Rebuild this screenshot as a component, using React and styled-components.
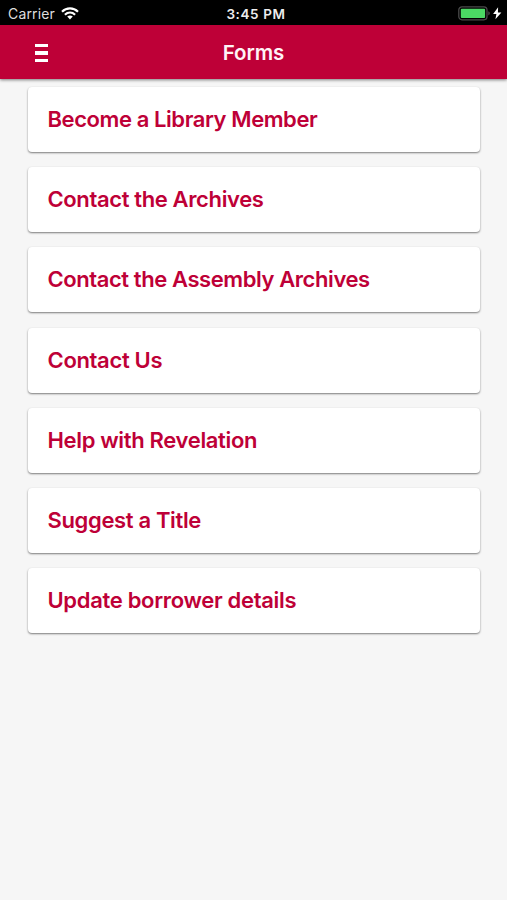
import React from "react";
import styled, { createGlobalStyle } from "styled-components";

const GlobalStyle = createGlobalStyle`
  * { box-sizing: border-box; }
  body {
    margin: 0;
    background: #f6f6f6;
    font-family: Inter, "Liberation Sans", sans-serif;
  }
`;

const Screen = styled.div`
  display: flex;
  flex-direction: column;
  height: 900px;
  overflow: hidden;
  background: #f6f6f6;
`;

const StatusBar = styled.div`
  display: grid;
  grid-template-columns: 1fr auto 1fr;
  align-items: center;
  flex: none;
  height: 25px;
  padding: 2px 5px 0 8px;
  background: #000;
  color: #fff;
  font-size: 14px;
  line-height: 20px;
`;

const Carrier = styled.div`
  display: flex;
  align-items: center;
  gap: 6px;
  color: #dedede;
  letter-spacing: 0.15px;
`;

const Clock = styled.time`
  padding-left: 2px;
  color: #ededed;
  font-weight: 600;
  font-size: 13.5px;
  letter-spacing: 0.6px;
`;

const Power = styled.div`
  display: flex;
  justify-content: flex-end;
`;

const Header = styled.header`
  display: grid;
  grid-template-columns: 1fr auto 1fr;
  align-items: center;
  flex: none;
  z-index: 1;
  height: 54px;
  padding: 2px 35px 0;
  background: #be0037;
  box-shadow: 0 1px 3px rgba(0, 0, 0, 0.5);
`;

const MenuButton = styled.button`
  display: flex;
  flex-direction: column;
  gap: 4px;
  width: 13px;
  padding: 0;
  border: 0;
  background: none;
`;

const MenuLine = styled.span`
  height: 3.5px;
  background: #fff;
`;

const Title = styled.h1`
  margin: 0;
  color: #fff3f6;
  font-size: 20.5px;
  font-weight: 600;
  letter-spacing: -0.1px;
  line-height: 26px;
`;

const List = styled.main`
  display: flex;
  flex-direction: column;
  gap: 15.2px;
  padding: 8px 27px 0 28px;
`;

const Card = styled.a`
  display: flex;
  align-items: center;
  height: 65px;
  padding: 0 20px 1px 19.5px;
  border-radius: 4px;
  background: #fff;
  box-shadow: 0 1px 2px rgba(0, 0, 0, 0.5);
  color: #be0037;
  font-size: 22px;
  font-weight: 600;
  letter-spacing: ${({ $spacing }) => $spacing}px;
  line-height: 28px;
  white-space: nowrap;
`;

const forms = [
  { label: "Become a Library Member", spacing: -0.42 },
  { label: "Contact the Archives", spacing: -0.37 },
  { label: "Contact the Assembly Archives", spacing: -0.42 },
  { label: "Contact Us", spacing: -0.33 },
  { label: "Help with Revelation", spacing: -0.34 },
  { label: "Suggest a Title", spacing: -0.35 },
  { label: "Update borrower details", spacing: -0.32 },
];

function WifiIcon() {
  return (
    <svg width="18" height="13" viewBox="0 0 18 13" fill="none" stroke="#fff" strokeWidth="2.2">
      <path d="M1 4.7C5.5.3 12.5.3 17 4.7" />
      <path d="M3.9 7.7c3-2.8 7.2-2.8 10.2 0" />
      <path d="M6.2 9.5c1.7-1.4 3.9-1.4 5.6 0L9 12.5z" fill="#fff" stroke="none" />
    </svg>
  );
}

function BatteryIcon() {
  return (
    <svg width="44" height="15" viewBox="0 0 44 15">
      <rect x=".8" y=".8" width="28.2" height="13" rx="3.2" fill="none" stroke="#4a4a4a" strokeWidth="1.3" />
      <rect x="2.8" y="2.7" width="24.3" height="9.2" rx="1" fill="#4bd964" />
      <path d="M30.4 5.2c1.8.6 1.8 3.6 0 4.2z" fill="#555" />
      <path d="M40.1 1.3 35.1 8h3.3l-1 5.3 6-6.9h-3.5z" fill="#fff" />
    </svg>
  );
}

export default function App() {
  return (
    <>
      <GlobalStyle />
      <Screen>
        <StatusBar>
          <Carrier>
            <span>Carrier</span>
            <WifiIcon />
          </Carrier>
          <Clock>3:45 PM</Clock>
          <Power>
            <BatteryIcon />
          </Power>
        </StatusBar>
        <Header>
          <MenuButton aria-label="Menu">
            <MenuLine />
            <MenuLine />
            <MenuLine />
          </MenuButton>
          <Title>Forms</Title>
        </Header>
        <List>
          {forms.map(({ label, spacing }) => (
            <Card key={label} $spacing={spacing}>
              {label}
            </Card>
          ))}
        </List>
      </Screen>
    </>
  );
}
